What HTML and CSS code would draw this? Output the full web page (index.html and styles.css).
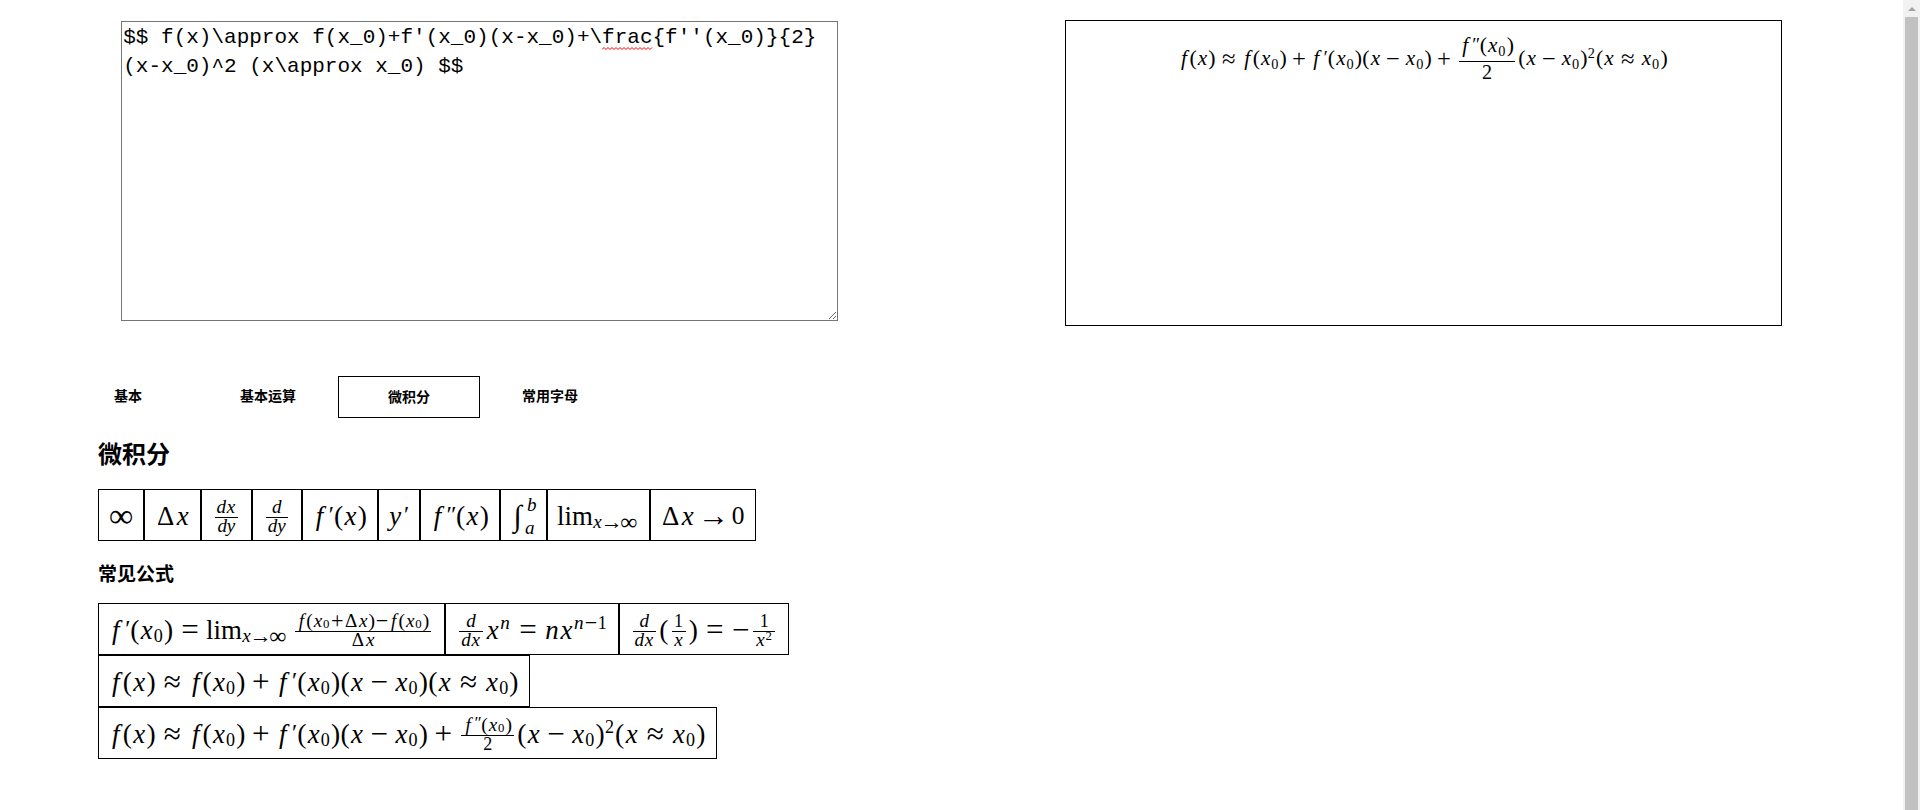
FILE: index.html
```html
<!DOCTYPE html>
<html lang="zh-CN">
<head>
<meta charset="utf-8">
<title>公式编辑器</title>
<link rel="stylesheet" href="styles.css">
</head>
<body>
<main class="page">
  <section class="workspace">
    <div class="pane">
      <div class="editor">
        <textarea class="source" aria-label="公式源码" spellcheck="false">$$ f(x)\approx f(x_0)+f'(x_0)(x-x_0)+\frac{f''(x_0)}{2}
(x-x_0)^2 (x\approx x_0) $$</textarea>
        <svg class="squiggle" width="51" height="3" viewBox="0 0 51 3" aria-hidden="true"><path d="M0 2.5l2-2 2 2 2-2 2 2 2-2 2 2 2-2 2 2 2-2 2 2 2-2 2 2 2-2 2 2 2-2 2 2 2-2 2 2 2-2 2 2 2-2 2 2 2-2 2 2 2-2" fill="none" stroke="#f00"/></svg>
      </div>
    </div>
    <div class="pane">
      <div class="preview"><span class="math display" data-tex="f(x)\approx f(x_{0})+f'(x_{0})(x-x_{0})+\frac{f''(x_{0})}{2}(x-x_{0})^{2}(x\approx x_{0})"></span></div>
    </div>
  </section>

  <nav class="tabs">
    <button class="tab" type="button">基本</button>
    <button class="tab" type="button">基本运算</button>
    <button class="tab active" type="button">微积分</button>
    <button class="tab" type="button">常用字母</button>
  </nav>

  <section class="palette">
    <h2 class="title">微积分</h2>
    <div class="row">
      <button class="cell math" type="button" data-tex="\infty"></button>
      <button class="cell math" type="button" data-tex="\Delta x"></button>
      <button class="cell math" type="button" data-tex="\frac{dx}{dy}"></button>
      <button class="cell math" type="button" data-tex="\frac{d}{dy}"></button>
      <button class="cell math" type="button" data-tex="f'(x)"></button>
      <button class="cell math" type="button" data-tex="y'"></button>
      <button class="cell math" type="button" data-tex="f''(x)"></button>
      <button class="cell math" type="button" data-tex="\int{a}{b}"></button>
      <button class="cell math" type="button" data-tex="\lim_{x\to\infty}"></button>
      <button class="cell math" type="button" data-tex="\Delta x\to 0"></button>
    </div>
    <h3 class="subtitle">常见公式</h3>
    <div class="row">
      <button class="cell math" type="button" data-tex="f'(x_{0})=\lim_{x\to\infty}\,\frac{f(x_{0}+\Delta x)-f(x_{0})}{\Delta x}"></button>
      <button class="cell math" type="button" data-tex="\frac{d}{dx}x^{n}=nx^{n-1}"></button>
      <button class="cell math" type="button" data-tex="\frac{d}{dx}(\frac{1}{x})=\neg\frac{1}{x^{2}}"></button>
    </div>
    <div class="row">
      <button class="cell math" type="button" data-tex="f(x)\approx f(x_{0})+f'(x_{0})(x-x_{0})(x\approx x_{0})"></button>
    </div>
    <div class="row">
      <button class="cell math" type="button" data-tex="f(x)\approx f(x_{0})+f'(x_{0})(x-x_{0})+\frac{f''(x_{0})}{2}(x-x_{0})^{2}(x\approx x_{0})"></button>
    </div>
  </section>
</main>
<div class="rail" aria-hidden="true"><span class="rail-arrow"></span><span class="rail-thumb"></span></div>
<script src="math.js"></script>
</body>
</html>
```
FILE: styles.css
```css
* { box-sizing: border-box; }

body {
  display: flex;
  min-height: 100vh;
  margin: 0;
  background: #fff;
  color: #000;
  font-family: "Noto Sans", "Noto Sans CJK SC", sans-serif;
}

button { font: inherit; color: inherit; background: none; border: 0; padding: 0; margin: 0; }

.page { flex: 1; min-width: 0; padding: 20px 8px; }

.workspace { display: flex; }
.pane { flex: 1; display: flex; justify-content: center; align-items: flex-start; }

.editor { position: relative; width: 76%; padding-top: 1px; }
.source {
  display: block;
  width: 100%;
  height: 300px;
  padding: 1px;
  border: 1px solid #767676;
  border-radius: 0;
  background: #fff;
  color: #000;
  font: 21px/29px "Liberation Mono", "Noto Sans CJK SC", monospace;
}
.squiggle { position: absolute; left: 481px; top: 27px; }

.preview {
  display: flex;
  justify-content: center;
  align-items: flex-start;
  width: 76%;
  height: 306px;
  padding-top: 15px;
  border: 1px solid #000;
}

.tabs { display: flex; align-items: flex-start; margin: 50px 0 0 50px; }
.tab { min-width: 140px; height: 40px; font-size: 14px; line-height: 20px; font-weight: 700; }
.tab.active { min-width: 142px; height: 42px; border: 1px solid #000; }

.palette { padding-left: 90px; }
.title { margin: 19px 0 19px; font-size: 24px; line-height: 33px; }
.subtitle { margin: 20px 0 16px; font-size: 19px; line-height: 26px; }
.row { display: flex; }
.cell { height: 52px; padding: 2px 10px 0; border: 1px solid #000; }

/* Formula typesetting: every atom is centred on one line */
.math {
  display: flex;
  align-items: center;
  font-family: "Liberation Serif", "DejaVu Serif", serif;
  font-size: 24px;
  line-height: 1;
  white-space: nowrap;
}
.math.display { font-size: 19px; }
.group { display: flex; align-items: center; }
.atom { display: flex; justify-content: center; flex: none; }
.italic { font-style: italic; }
.glyph-wide { font-size: 130%; }
.glyph-huge { font-size: 142%; }
.glyph-tall { font-size: 115%; }
.glyph-digit { font-size: 106%; }
.glyph-slant { font-size: 112%; }
.script { display: flex; align-items: center; font-size: 71%; margin-right: 1px; }
.sub { margin-top: 12px; }
.sup { margin-bottom: 14px; }
.display .sub { margin-top: 10px; }
.display .sup { margin-bottom: 12px; }
.prime { margin-bottom: 4px; }

.frac { display: flex; flex-direction: column; align-items: center; font-size: 71%; margin: 1px 3px 0; }
.frac .group { height: 16px; padding: 0 2px; }
.frac .num { margin-bottom: 2px; }
.frac .sub { margin-top: 6px; }
.frac .sup { margin-bottom: 8px; }
.bar { align-self: stretch; height: 1px; background: #000; }
.display .frac { font-size: 100%; margin: 0 3px; }
.display .frac .group { height: 20px; padding: 0 1px; }
.display .frac .num { margin-bottom: 5px; }
.display .frac .sub { margin-top: 10px; }

.integral { display: flex; align-items: center; }
.integral-sign { width: 13px; font-size: 30px; font-style: italic; }
.limits { display: flex; flex-direction: column; font-size: 71%; }
.limits .upper { padding-left: 4px; margin-bottom: 4px; }
.limits .lower { padding-left: 1px; }

.rail { display: flex; flex-direction: column; align-items: center; width: 17px; background: #f1f1f1; }
.rail-arrow { margin: 7px 0 6px; border: 4px solid transparent; border-top: 0; border-bottom-color: #a3a3a3; }
.rail-thumb { flex: 1; width: 13px; background: #c1c1c1; }
```
FILE: math.js
```javascript
// Advance widths in em, glyph and style of each symbol.
const SYMBOLS = {
  "f": [0.56, "f", "italic glyph-slant"],
  "x": [0.59, "x", "italic glyph-slant"],
  "y": [0.5, "y", "italic glyph-slant"],
  "d": [0.54, "d", "italic glyph-slant"],
  "n": [0.62, "n", "italic glyph-slant"],
  "a": [0.55, "a", "italic glyph-slant"],
  "b": [0.44, "b", "italic glyph-slant"],
  "(": [0.4, "(", "glyph-tall"],
  ")": [0.4, ")", "glyph-tall"],
  "0": [0.53, "0", "glyph-digit"],
  "1": [0.53, "1", "glyph-digit"],
  "2": [0.53, "2", "glyph-digit"],
  "'": [0.32, "′", "italic prime"],
  "''": [0.48, "″", "italic prime"],
  "+": [0.8, "+", "glyph-wide", 0.23],
  "-": [0.8, "−", "glyph-wide", 0.23],
  "=": [0.8, "=", "glyph-wide", 0.29],
  "\\neg": [0.8, "−", "glyph-wide"],
  "\\approx": [0.8, "≈", "glyph-wide", 0.29],
  "\\to": [1.04, "→", "glyph-wide", 0.25],
  "\\infty": [1.02, "∞", "glyph-huge"],
  "\\Delta": [0.84, "Δ", "glyph-slant"],
  "\\lim": [1.45, "lim", "glyph-slant"],
  "\\,": [0.17, "", ""]
};

function node(className, ...children) {
  const el = document.createElement("span");
  el.className = className;
  el.append(...children);
  return el;
}

function atom(name, tight) {
  const [width, text, style, space = 0] = SYMBOLS[name];
  const el = node("atom", node(style, text));
  el.style.width = (width + (tight ? 0 : space * 2)) + "em";
  return el;
}

function typeset(tex, tight) {
  const tokens = tex.match(/\\[a-zA-Z]+|\\,|''|\S/g) || [];
  let i = 0;
  const argument = () => {
    let depth = 1;
    const start = ++i;
    while (depth) {
      if (tokens[i] === "{") depth++;
      if (tokens[i] === "}") depth--;
      i++;
    }
    return tokens.slice(start, i - 1).join(" ");
  };
  const out = [];
  while (i < tokens.length) {
    const token = tokens[i++];
    if (token === "_" || token === "^") {
      out.push(node("script " + (token === "_" ? "sub" : "sup"), ...typeset(argument(), true)));
    } else if (token === "\\frac") {
      const num = node("group num", ...typeset(argument(), true));
      const den = node("group", ...typeset(argument(), true));
      out.push(node("frac", num, node("bar"), den));
    } else if (token === "\\int") {
      const lower = node("group lower", ...typeset(argument(), true));
      const upper = node("group upper", ...typeset(argument(), true));
      out.push(node("integral", node("integral-sign", "∫"), node("limits", upper, lower)));
    } else {
      out.push(atom(token, tight));
    }
  }
  return out;
}

document.querySelectorAll("[data-tex]").forEach((el) => {
  el.append(...typeset(el.dataset.tex, false));
});
```
